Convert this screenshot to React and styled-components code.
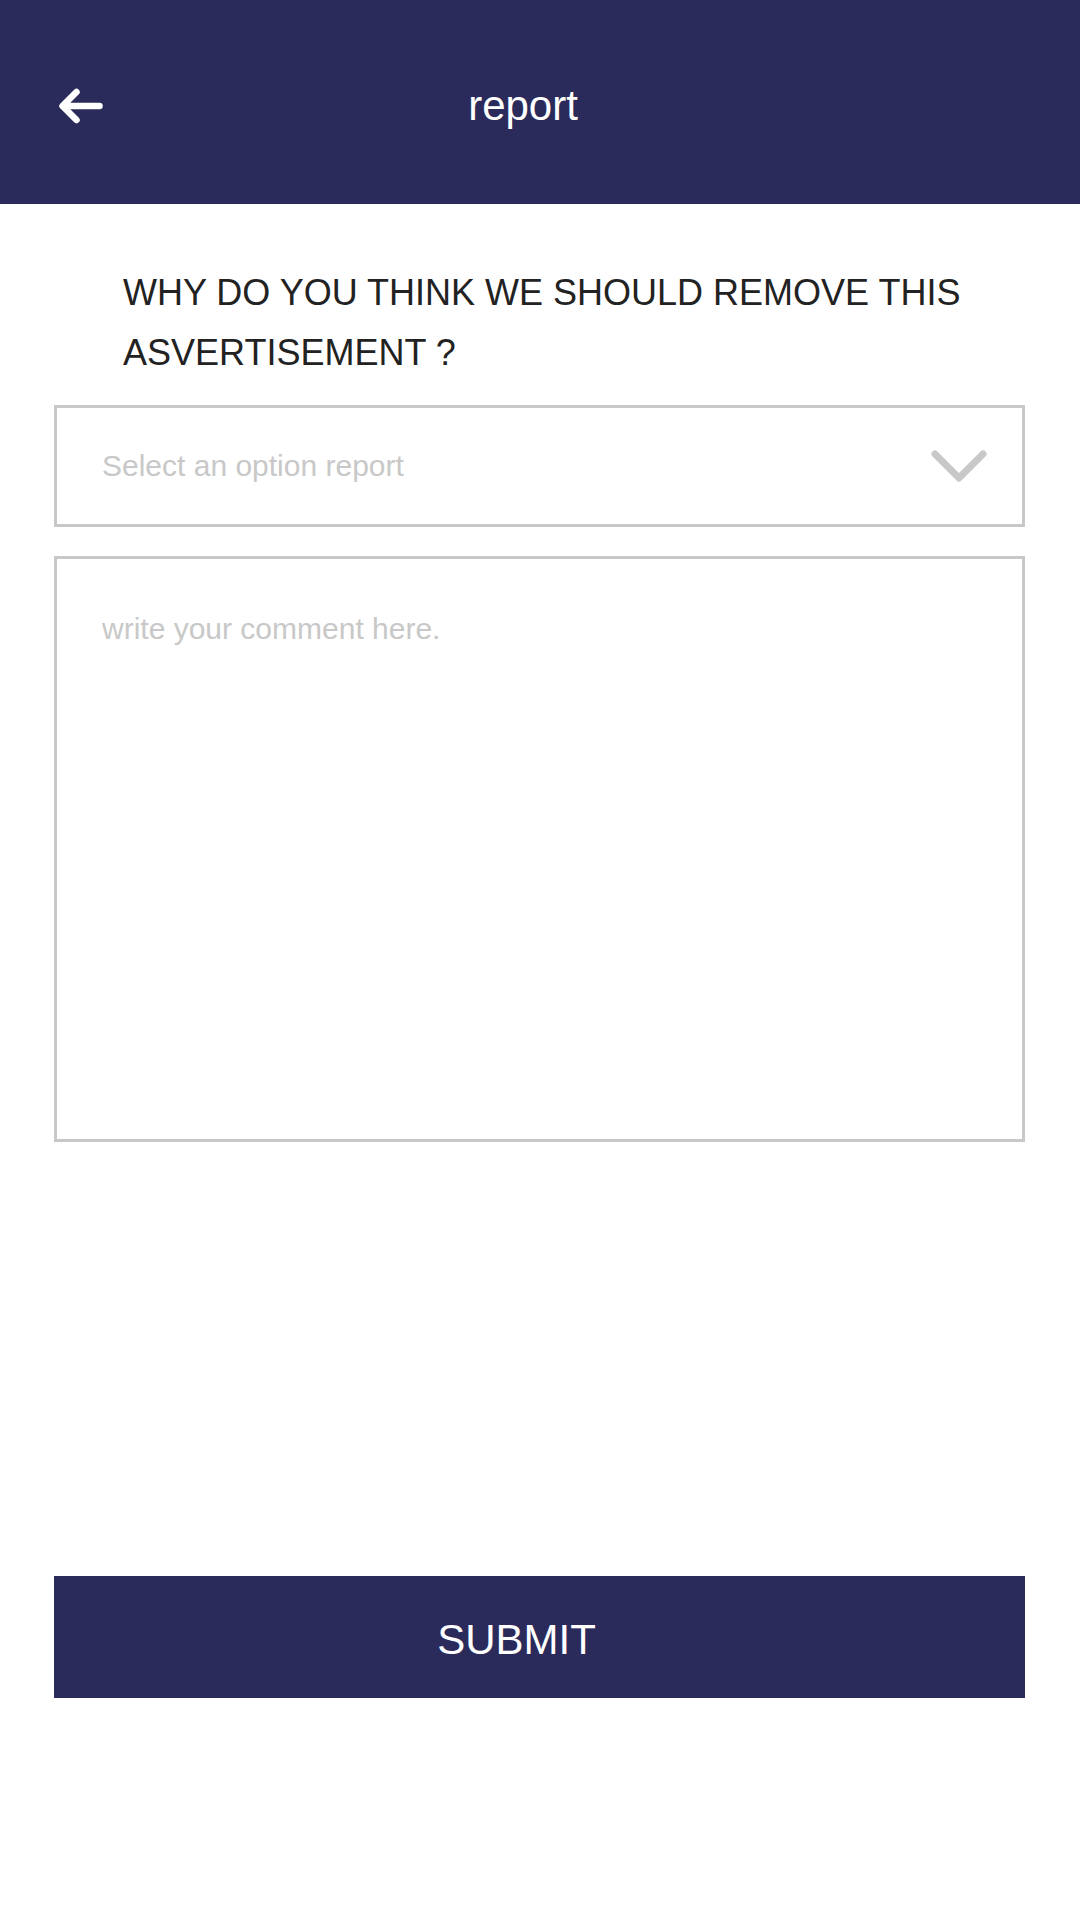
import React from "react";
import styled, { createGlobalStyle } from "styled-components";

const GlobalStyle = createGlobalStyle`
  html, body {
    margin: 0;
    padding: 0;
    background: #ffffff;
  }
  body {
    font-family: "Liberation Sans", Arial, Helvetica, sans-serif;
  }
  * { box-sizing: border-box; }
`;

const NAVY = "#2b2b5b";
const LINE = "#c8c8c8";

const Page = styled.div`
  width: 1080px;
  min-height: 1920px;
  background: #ffffff;
  display: flex;
  flex-direction: column;
`;

const Header = styled.header`
  height: 204px;
  background: ${NAVY};
  display: flex;
  align-items: center;
  padding: 7px 137px 0 59px;
`;

const BackButton = styled.button`
  width: 44px;
  height: 36px;
  padding: 0;
  border: 0;
  background: transparent;
  display: flex;
  cursor: pointer;
`;

const Title = styled.h1`
  flex: 1;
  margin: 0;
  text-align: center;
  font-size: 42px;
  font-weight: 400;
  color: #ffffff;
  line-height: normal;
`;

const Form = styled.form`
  display: flex;
  flex-direction: column;
  padding: 0 55px 0 54px;
`;

const Question = styled.p`
  margin: 59px 0 0;
  padding-left: 69px;
  font-size: 36px;
  line-height: 60px;
  color: #222222;
`;

const SelectBox = styled.div`
  margin-top: 22px;
  height: 122px;
  border: 3px solid ${LINE};
  display: flex;
  align-items: center;
  justify-content: space-between;
  padding: 0 35px 0 45px;
`;

const Placeholder = styled.span`
  font-size: 30px;
  color: ${LINE};
`;

const Comment = styled.textarea`
  margin-top: 29px;
  height: 586px;
  border: 3px solid ${LINE};
  border-radius: 0;
  padding: 53px 45px;
  font-family: "Liberation Sans", Arial, Helvetica, sans-serif;
  font-size: 30px;
  line-height: normal;
  color: #222222;
  resize: none;
  outline: none;
  &::placeholder {
    color: ${LINE};
    opacity: 1;
  }
`;

const SubmitButton = styled.button`
  margin-top: 434px;
  height: 122px;
  border: 0;
  background: ${NAVY};
  color: #ffffff;
  font-family: "Liberation Sans", Arial, Helvetica, sans-serif;
  font-size: 42px;
  padding: 6px 46px 0 0;
  text-align: center;
  cursor: pointer;
`;

export default function App() {
  return (
    <>
      <GlobalStyle />
      <Page>
        <Header>
          <BackButton aria-label="back">
            <svg width="44" height="36" viewBox="0 0 44 36" fill="none">
              <path
                d="M40.5 18 H4 M17.5 4 L3.5 18 L17.5 32"
                stroke="#ffffff"
                strokeWidth="6.5"
                strokeLinecap="round"
                strokeLinejoin="round"
              />
            </svg>
          </BackButton>
          <Title>report</Title>
        </Header>
        <Form onSubmit={(e) => e.preventDefault()}>
          <Question>WHY DO YOU THINK WE SHOULD REMOVE THIS ASVERTISEMENT ?</Question>
          <SelectBox>
            <Placeholder>Select an option report</Placeholder>
            <svg width="56" height="33" viewBox="0 0 56 33" fill="none">
              <polyline
                points="4,4 28,28 52,4"
                stroke={LINE}
                strokeWidth="7"
                strokeLinecap="round"
                strokeLinejoin="round"
              />
            </svg>
          </SelectBox>
          <Comment placeholder="write your comment here." />
          <SubmitButton type="submit">SUBMIT</SubmitButton>
        </Form>
      </Page>
    </>
  );
}
